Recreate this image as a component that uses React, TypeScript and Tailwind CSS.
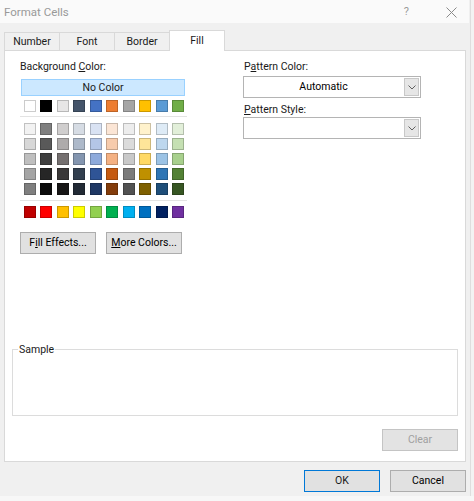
import React from "react";

const themeRow = ["#FFFFFF", "#000000", "#E7E6E6", "#44546A", "#4472C4", "#ED7D31", "#A5A5A5", "#FFC000", "#5B9BD5", "#70AD47"];

const shadeRows = [
    ["#F2F2F2", "#7F7F7F", "#D0CECE", "#D6DCE4", "#D9E2F3", "#FBE5D5", "#EDEDED", "#FFF2CC", "#DEEBF6", "#E2EFD9"],
    ["#D8D8D8", "#595959", "#AEABAB", "#ADB9CA", "#B4C6E7", "#F7CBAC", "#DBDBDB", "#FEE599", "#BDD7EE", "#C5E0B3"],
    ["#BFBFBF", "#3F3F3F", "#757070", "#8496B0", "#8EAADB", "#F4B183", "#C9C9C9", "#FFD965", "#9CC3E5", "#A8D08D"],
    ["#A5A5A5", "#262626", "#3A3838", "#323F4F", "#2F5496", "#C55A11", "#7B7B7B", "#BF9000", "#2E75B5", "#538135"],
    ["#7F7F7F", "#0C0C0C", "#171616", "#222A35", "#1F3864", "#833C0B", "#525252", "#7F6000", "#1E4E79", "#375623"],
];

const standardRow = ["#C00000", "#FF0000", "#FFC000", "#FFFF00", "#92D050", "#00B050", "#00B0F0", "#0070C0", "#002060", "#7030A0"];

const tabs = ["Number", "Font", "Border", "Fill"];

function SwatchRow({ colors }: { colors: string[] }) {
    return (
        <div className="flex justify-between pl-[4px] pr-[3px]">
            {colors.map((c, i) => (
                <div key={i} className="h-[12px] w-[12px] border border-black/20" style={{ backgroundColor: c }} />
            ))}
        </div>
    );
}

function Chevron() {
    return (
        <svg width="8" height="5" viewBox="0 0 8 5" fill="none">
            <path d="M0.5 0.5 L4 4 L7.5 0.5" stroke="#606060" strokeWidth="1" />
        </svg>
    );
}

function Dropdown({ value }: { value?: string }) {
    return (
        <div className="flex h-[22px] w-[178px] border border-[#b4b4b4] bg-white">
            <div className="flex flex-1 items-center justify-center text-black">{value}</div>
            <div className="m-px flex w-[15px] items-center justify-center border border-[#c8c8c8] bg-[#e6e6e6]">
                <Chevron />
            </div>
        </div>
    );
}

function Button({ children, className }: { children: React.ReactNode; className?: string }) {
    return (
        <div className={"flex h-[22px] w-[76px] items-center justify-center border " + (className ?? "border-[#adadad] bg-[#e1e1e1] text-black")}>
            {children}
        </div>
    );
}

export default function App() {
    return (
        <div
            className="relative flex h-[501px] w-[474px] bg-[#f0f0f0] text-[10.5px] leading-[16px] text-[#1a1a1a]"
            style={{ fontFamily: 'Roboto, "Noto Sans", sans-serif' }}
        >
            <div className="flex h-[496px] w-[469px] flex-col">
                {/* title bar */}
                <div className="flex h-[23px] items-center bg-[#fafafa] pl-[4px] pt-px">
                    <span className="text-[11.5px] text-[#999999]">Format Cells</span>
                    <span className="ml-auto mr-[37px] text-[11px] text-[#9a9a9a]">?</span>
                    <svg width="11" height="11" viewBox="0 0 11 11" className="mr-[12px]">
                        <path d="M0.5 0.5 L10.5 10.5 M10.5 0.5 L0.5 10.5" stroke="#8a8a8a" strokeWidth="1" />
                    </svg>
                </div>

                {/* tabs */}
                <div className="mt-[7px] flex h-[20px] items-end pl-[4px]">
                    {tabs.map((t) => {
                        const active = t === "Fill";
                        return active ? (
                            <div
                                key={t}
                                className="relative z-10 -mb-px flex h-[21px] w-[56px] items-center justify-center border border-b-0 border-[#d9d9d9] bg-white"
                            >
                                {t}
                            </div>
                        ) : (
                            <div
                                key={t}
                                className="-mr-px flex h-[18px] w-[56px] items-center justify-center border border-b-0 border-[#d9d9d9] bg-[#f0f0f0]"
                            >
                                {t}
                            </div>
                        );
                    })}
                </div>

                {/* panel */}
                <div className="ml-[4px] flex h-[412px] w-[462px] flex-col border border-[#d9d9d9] bg-white">
                    <div className="flex pt-[8px]">
                        {/* background colour */}
                        <div className="ml-[15px] flex w-[167px] flex-col">
                            <div className="h-[16px]">
                                Background <span className="underline">C</span>olor:
                            </div>
                            <div className="ml-px mt-[4px] flex h-[17px] w-[164px] items-center justify-center border border-[#99d1ff] bg-[#cce8ff]">
                                No Color
                            </div>
                            <div className="mt-[4px]">
                                <SwatchRow colors={themeRow} />
                            </div>
                            <div className="mt-[4px] h-px bg-[#e3e3e3]" />
                            <div className="mt-[6px] flex flex-col gap-[3px]">
                                {shadeRows.map((r, i) => (
                                    <SwatchRow key={i} colors={r} />
                                ))}
                            </div>
                            <div className="mt-[5px] h-px bg-[#e3e3e3]" />
                            <div className="mt-[5px]">
                                <SwatchRow colors={standardRow} />
                            </div>
                            <div className="mt-[14px] flex gap-[10px]">
                                <Button>
                                    <span>
                                        F<span className="underline">i</span>ll Effects...
                                    </span>
                                </Button>
                                <Button>
                                    <span>
                                        <span className="underline">M</span>ore Colors...
                                    </span>
                                </Button>
                            </div>
                        </div>

                        {/* pattern */}
                        <div className="ml-[56px] flex flex-col">
                            <div className="ml-px h-[16px]">
                                P<span className="underline">a</span>ttern Color:
                            </div>
                            <div className="mt-px">
                                <Dropdown value="Automatic" />
                            </div>
                            <div className="ml-px mt-[4px] h-[15px]">
                                <span className="underline">P</span>attern Style:
                            </div>
                            <Dropdown />
                        </div>
                    </div>

                    {/* sample */}
                    <div className="relative mx-[7px] mt-[95px] h-[67px] border border-[#dcdcdc]">
                        <span className="absolute -top-[8px] left-[5px] bg-white px-px">Sample</span>
                    </div>

                    <div className="mr-[7px] mt-[13px] flex justify-end">
                        <Button className="border-[#c4c4c4] bg-[#e3e3e3] text-[#a0a0a0]">Clear</Button>
                    </div>
                </div>

                {/* footer */}
                <div className="mt-[8px] flex justify-end gap-[10px] pr-[3px]">
                    <Button className="border-[#0078d7] bg-[#e1e1e1] text-[#1a1a1a]">OK</Button>
                    <Button>Cancel</Button>
                </div>
            </div>

            {/* window behind */}
            <div className="ml-px w-px bg-[#dedede]" />
            <div className="flex-1 bg-[#f3f3f3]" />
            <div className="absolute bottom-0 left-0 h-[5px] w-[474px] bg-[#f7f7f7]" />
        </div>
    );
}
